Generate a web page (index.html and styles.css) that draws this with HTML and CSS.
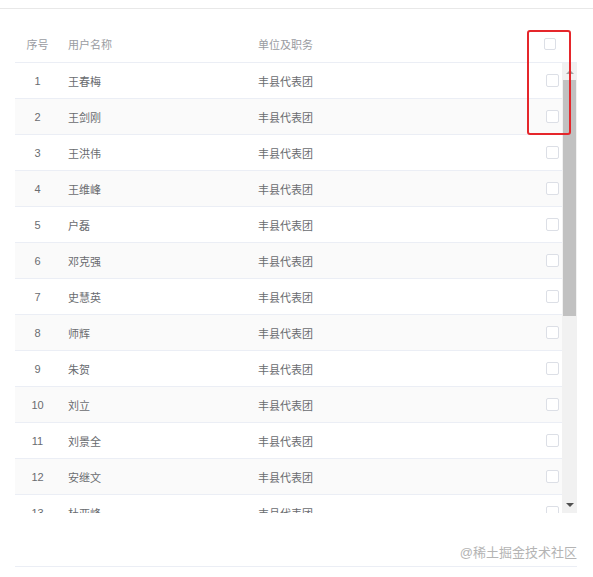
FILE: index.html
```html
<!DOCTYPE html>
<html lang="zh">
<head>
<meta charset="utf-8">
<link rel="stylesheet" href="styles.css">
</head>
<body>
<div class="topline"></div>
<div class="table">
  <div class="thead">
    <div class="c-idx">序号</div>
    <div class="c-name">用户名称</div>
    <div class="c-unit">单位及职务</div>
    <div class="c-chk"><span class="chk"></span></div>
    <div></div>
  </div>
  <div class="body-wrap">
    <div class="tbody">
      <div class="row"><div class="c-idx">1</div><div class="c-name">王春梅</div><div class="c-unit">丰县代表团</div><div class="c-chk"><span class="chk"></span></div></div>
      <div class="row"><div class="c-idx">2</div><div class="c-name">王剑刚</div><div class="c-unit">丰县代表团</div><div class="c-chk"><span class="chk"></span></div></div>
      <div class="row"><div class="c-idx">3</div><div class="c-name">王洪伟</div><div class="c-unit">丰县代表团</div><div class="c-chk"><span class="chk"></span></div></div>
      <div class="row"><div class="c-idx">4</div><div class="c-name">王维峰</div><div class="c-unit">丰县代表团</div><div class="c-chk"><span class="chk"></span></div></div>
      <div class="row"><div class="c-idx">5</div><div class="c-name">户磊</div><div class="c-unit">丰县代表团</div><div class="c-chk"><span class="chk"></span></div></div>
      <div class="row"><div class="c-idx">6</div><div class="c-name">邓克强</div><div class="c-unit">丰县代表团</div><div class="c-chk"><span class="chk"></span></div></div>
      <div class="row"><div class="c-idx">7</div><div class="c-name">史慧英</div><div class="c-unit">丰县代表团</div><div class="c-chk"><span class="chk"></span></div></div>
      <div class="row"><div class="c-idx">8</div><div class="c-name">师辉</div><div class="c-unit">丰县代表团</div><div class="c-chk"><span class="chk"></span></div></div>
      <div class="row"><div class="c-idx">9</div><div class="c-name">朱贺</div><div class="c-unit">丰县代表团</div><div class="c-chk"><span class="chk"></span></div></div>
      <div class="row"><div class="c-idx">10</div><div class="c-name">刘立</div><div class="c-unit">丰县代表团</div><div class="c-chk"><span class="chk"></span></div></div>
      <div class="row"><div class="c-idx">11</div><div class="c-name">刘景全</div><div class="c-unit">丰县代表团</div><div class="c-chk"><span class="chk"></span></div></div>
      <div class="row"><div class="c-idx">12</div><div class="c-name">安继文</div><div class="c-unit">丰县代表团</div><div class="c-chk"><span class="chk"></span></div></div>
      <div class="row"><div class="c-idx">13</div><div class="c-name">杜亚峰</div><div class="c-unit">丰县代表团</div><div class="c-chk"><span class="chk"></span></div></div>
    </div>
    <div class="scrollbar">
      <div class="sb-btn"><span class="arrow-up"></span></div>
      <div class="sb-thumb"></div>
      <div class="sb-track"></div>
      <div class="sb-btn"><span class="arrow-down"></span></div>
    </div>
  </div>
  <div class="tfoot"></div>
  <div class="highlight"></div>
</div>
<div class="watermark">@稀土掘金技术社区</div>
</body>
</html>
```

FILE: styles.css
```css
html, body {
  margin: 0;
  padding: 0;
  background: #ffffff;
}
body {
  font-family: "Liberation Sans", "Noto Sans CJK SC", sans-serif;
  font-size: 11px;
  color: #6a6c70;
  width: 593px;
  height: 577px;
  position: relative;
  overflow: hidden;
}
.topline {
  height: 8px;
  border-bottom: 1px solid #e8e8e8;
}
.table {
  position: relative;
  margin-left: 15px;
  width: 562px;
  margin-top: 18px;
}
.thead {
  display: grid;
  grid-template-columns: 45px 198px 1fr 40px 15px;
  height: 36px;
  padding-bottom: 2px;
  box-sizing: border-box;
  border-bottom: 1px solid #ebeef5;
  align-items: center;
  color: #9a9ca2;
}
.row {
  display: grid;
  grid-template-columns: 45px 198px 1fr 40px;
  height: 36px;
  box-sizing: border-box;
  border-bottom: 1px solid #ebeef5;
  align-items: center;
  flex-shrink: 0;
}
.row:nth-child(even) {
  background: #fafafa;
}
.c-idx {
  text-align: center;
}
.c-name {
  padding-left: 8px;
}
.c-chk {
  display: flex;
  justify-content: flex-end;
  align-items: center;
}
.row .c-chk {
  padding-right: 3px;
}
.thead .c-chk {
  padding-right: 6px;
}
.chk {
  display: block;
  width: 13px;
  height: 13px;
  box-sizing: border-box;
  border: 1px solid #dcdfe6;
  border-radius: 2px;
  background: #fff;
}
.thead .chk {
  width: 12px;
  height: 12px;
}
.body-wrap {
  display: flex;
  height: 450px;
}
.tbody {
  width: 547px;
  height: 450px;
  overflow: hidden;
  display: flex;
  flex-direction: column;
}
.scrollbar {
  width: 15px;
  height: 450px;
  background: #f1f1f1;
  display: flex;
  flex-direction: column;
}
.sb-btn {
  height: 17px;
  display: flex;
  align-items: center;
  justify-content: center;
  flex-shrink: 0;
}
.arrow-up {
  width: 0;
  height: 0;
  border-left: 4px solid transparent;
  border-right: 4px solid transparent;
  border-bottom: 4px solid #a3a3a3;
}
.arrow-down {
  width: 0;
  height: 0;
  border-left: 4px solid transparent;
  border-right: 4px solid transparent;
  border-top: 4px solid #505050;
}
.sb-thumb {
  height: 236px;
  margin: 0 1px;
  background: #c1c1c1;
  flex-shrink: 0;
}
.sb-track {
  flex: 1;
}
.tfoot {
  height: 54px;
  box-sizing: border-box;
  border-bottom: 1px solid #ebeef5;
}
.highlight {
  position: absolute;
  left: 512px;
  top: 3px;
  width: 44px;
  height: 105px;
  box-sizing: border-box;
  border: 2px solid #e5262b;
  border-radius: 3px;
}
.watermark {
  position: absolute;
  right: 16px;
  top: 543px;
  font-size: 13px;
  line-height: 19px;
  color: #b4b4b4;
}
```
